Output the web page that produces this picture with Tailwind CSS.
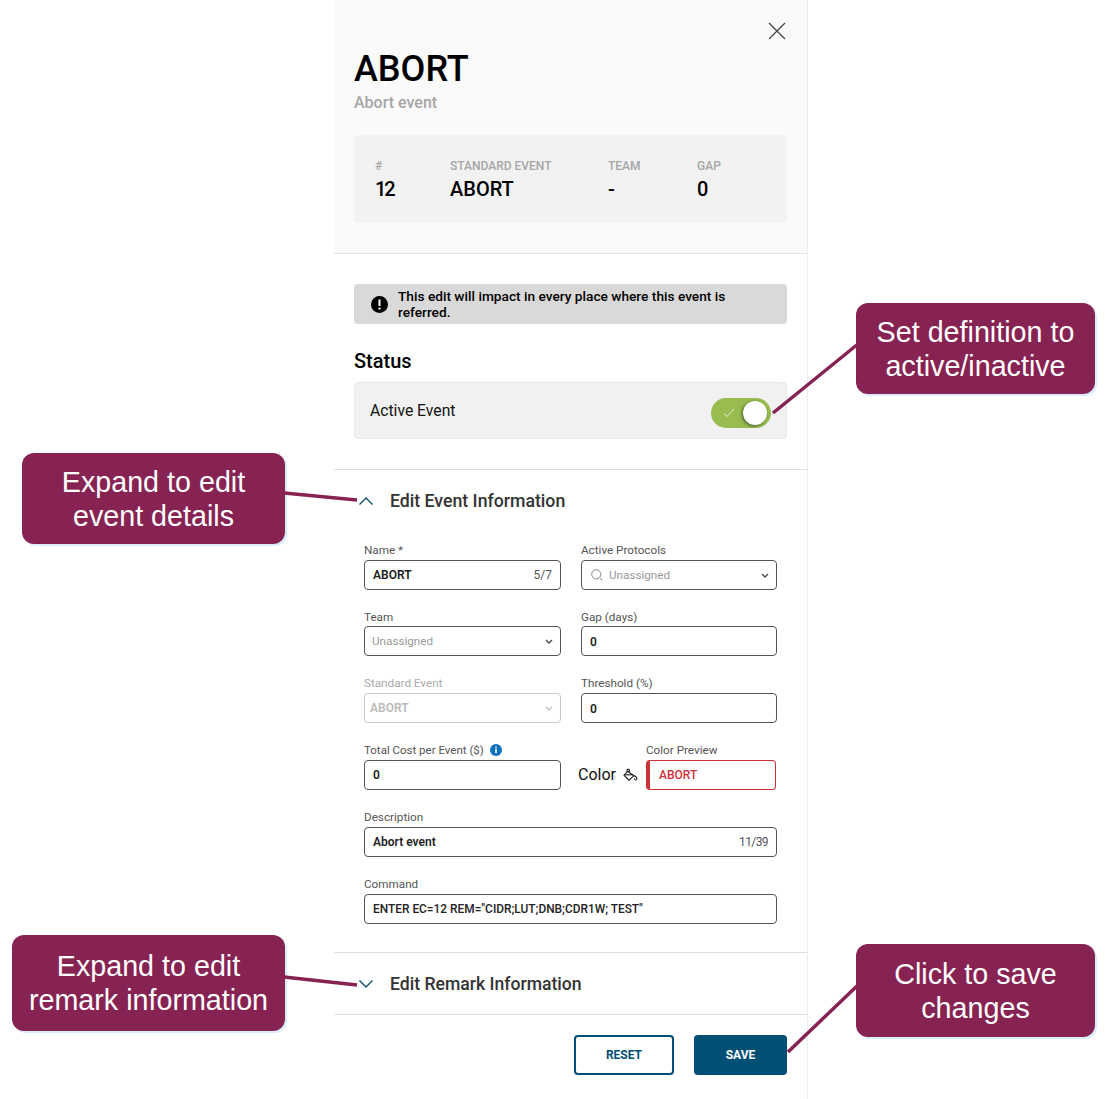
<!DOCTYPE html>
<html lang="en">
<head>
    <meta charset="UTF-8">
    <title>Edit Event</title>
    <script src="https://cdn.jsdelivr.net/npm/@tailwindcss/browser@4"></script>
</head>
<body class="bg-white font-['Roboto',sans-serif] overflow-hidden">
    <div class="relative w-[1112px] h-[1099px] overflow-hidden">
        <!-- panel -->
        <div class="ml-[334px] w-[474px] h-[1099px] border-r border-[#eeeeee] flex flex-col">
            <div class="h-[254px] shrink-0 bg-[#fafafa] border-b border-[#e3e3e3] px-5 relative">
                <svg class="absolute left-[434px] top-[22px]" width="18" height="18" viewBox="0 0 18 18" fill="none" stroke="#444" stroke-width="1.3"><path d="M1 1l16 16M17 1L1 17"/></svg>
                <h1 class="pt-[47px] text-[36px] leading-[44px] font-medium text-black">ABORT</h1>
                <p class="mt-[1px] text-[16px] leading-[22px] font-medium text-[#a6a6a6]">Abort event</p>
                <div class="mt-[21px] h-[88px] bg-[#f2f2f2] rounded flex pl-[21px] pt-6">
                    <div class="w-[75px]">
                        <div class="text-[12px] leading-[14px] font-medium text-[#a6a6a6]">#</div>
                        <div class="mt-[3px] text-[20px] leading-[26px] font-medium tracking-[-2px] text-black">12</div>
                    </div>
                    <div class="w-[158px]">
                        <div class="text-[12px] leading-[14px] font-medium text-[#a6a6a6]">STANDARD EVENT</div>
                        <div class="mt-[3px] text-[20px] leading-[26px] font-medium text-black">ABORT</div>
                    </div>
                    <div class="w-[89px]">
                        <div class="text-[12px] leading-[14px] font-medium text-[#a6a6a6]">TEAM</div>
                        <div class="mt-[3px] text-[20px] leading-[26px] font-medium text-black">-</div>
                    </div>
                    <div>
                        <div class="text-[12px] leading-[14px] font-medium text-[#a6a6a6]">GAP</div>
                        <div class="mt-[3px] text-[20px] leading-[26px] font-medium text-black">0</div>
                    </div>
                </div>
            </div>

            <div class="h-[216px] shrink-0 border-b border-[#dddddd] px-5 pt-[30px]">
                <div class="h-10 bg-[#d9d9d9] rounded flex items-center pl-[17px] pr-10 gap-[10px]">
                    <svg class="shrink-0" width="17" height="17" viewBox="0 0 17 17"><circle cx="8.5" cy="8.5" r="8.5" fill="#000"/><rect x="7.5" y="3.5" width="2" height="6.5" fill="#fff"/><rect x="7.5" y="11.5" width="2" height="2" fill="#fff"/></svg>
                    <p class="text-[13.7px] leading-4 font-medium text-black">This edit will impact in every place where this event is referred.</p>
                </div>
                <h2 class="mt-[25px] text-[20px] leading-6 font-medium text-black">Status</h2>
                <div class="mt-[9px] h-[57px] bg-[#f1f1f1] border border-[#e8e8e8] rounded flex items-center justify-between pl-[15px] pr-[15px]">
                    <span class="text-[15.7px] text-[#111]">Active Event</span>
                    <div class="mt-1 w-[60px] h-[30px] rounded-full bg-[#98bc4f] flex items-center justify-between pl-3 pr-1">
                        <svg width="12" height="10" viewBox="0 0 12 10" fill="none" stroke="#e6eecf" stroke-width="1"><path d="M1 5.5l3 3 7-7.5"/></svg>
                        <div class="w-6 h-6 rounded-full bg-white shadow-[-1px_1px_3px_rgba(0,0,0,0.55)]"></div>
                    </div>
                </div>
            </div>

            <div class="h-[483px] shrink-0 border-b border-[#dddddd]">
                <div class="h-[62px] flex items-center pl-[25px] gap-[17px]">
                    <svg width="14" height="8" viewBox="0 0 14 8" fill="none" stroke="#0e4f70" stroke-width="1.4"><path d="M0.5 7.5L7 1l6.5 6.5"/></svg>
                    <span class="text-[17.7px] font-medium text-[#333333]">Edit Event Information</span>
                </div>
                <div class="px-[30px] pt-[10px] grid grid-cols-[197px_196px] gap-x-5 gap-y-[19px] text-[11.7px]">
                    <label class="block -mb-px">
                        <span class="block leading-4 text-[#555]">Name *</span>
                        <div class="mt-[2px] h-[30px] border border-[#555] rounded flex items-center justify-between px-2">
                            <span class="text-[12px] font-semibold text-[#222]">ABORT</span>
                            <span class="text-[12px] text-[#555]">5/7</span>
                        </div>
                    </label>
                    <label class="block -mb-px">
                        <span class="block leading-4 text-[#555]">Active Protocols</span>
                        <div class="mt-[2px] h-[30px] border border-[#555] rounded flex items-center pl-[9px] pr-[7px]">
                            <svg width="12" height="12" viewBox="0 0 12 12" fill="none" stroke="#888" stroke-width="1"><circle cx="5.3" cy="5.3" r="4.6"/><path d="M8.7 8.7L11.5 11.5"/></svg>
                            <span class="ml-[6px] pt-px text-[#999]">Unassigned</span>
                            <svg class="ml-auto" width="8" height="5" viewBox="0 0 8 5" fill="none" stroke="#444" stroke-width="1.3"><path d="M1 1l3 3 3-3"/></svg>
                        </div>
                    </label>
                    <label class="block">
                        <span class="block mt-px leading-4 text-[#555]">Team</span>
                        <div class="mt-[1px] h-[30px] border border-[#555] rounded flex items-center justify-between pl-[7px] pr-[7px]">
                            <span class="pt-px text-[#999]">Unassigned</span>
                            <svg width="8" height="5" viewBox="0 0 8 5" fill="none" stroke="#444" stroke-width="1.3"><path d="M1 1l3 3 3-3"/></svg>
                        </div>
                    </label>
                    <label class="block">
                        <span class="block mt-px leading-4 text-[#555]">Gap (days)</span>
                        <div class="mt-[1px] h-[30px] border border-[#555] rounded flex items-center px-2">
                            <span class="pt-px text-[12px] font-semibold text-[#222]">0</span>
                        </div>
                    </label>
                    <label class="block">
                        <span class="block leading-4 text-[#aaa]">Standard Event</span>
                        <div class="mt-[2px] h-[30px] border border-[#c8c8c8] rounded flex items-center justify-between pl-[5px] pr-[7px]">
                            <span class="text-[12px] font-semibold text-[#bbb]">ABORT</span>
                            <svg width="8" height="5" viewBox="0 0 8 5" fill="none" stroke="#bbb" stroke-width="1.2"><path d="M1 1l3 3 3-3"/></svg>
                        </div>
                    </label>
                    <label class="block">
                        <span class="block leading-4 text-[#555]">Threshold (%)</span>
                        <div class="mt-[2px] h-[30px] border border-[#555] rounded flex items-center px-2">
                            <span class="pt-px text-[12px] font-semibold text-[#222]">0</span>
                        </div>
                    </label>
                    <label class="block">
                        <span class="flex items-center gap-[6px] text-[11.5px] leading-4 text-[#555]">Total Cost per Event ($)
                            <svg width="12" height="12" viewBox="0 0 12 12"><circle cx="6" cy="6" r="6" fill="#0b72bd"/><rect x="5.2" y="5" width="1.6" height="4.2" fill="#fff"/><rect x="5.2" y="2.7" width="1.6" height="1.5" fill="#fff"/></svg>
                        </span>
                        <div class="mt-[2px] h-[30px] border border-[#555] rounded flex items-center px-2">
                            <span class="text-[12px] font-semibold text-[#222]">0</span>
                        </div>
                    </label>
                    <div class="flex items-end">
                        <div class="h-[30px] flex items-center -ml-[3px] w-[68px]">
                            <span class="text-[16px] text-[#111]">Color</span>
                            <svg class="ml-[7px]" width="15" height="14" viewBox="0 0 15 14" fill="none" stroke="#222" stroke-width="1.1"><path d="M5 3.2L1 7.2l5 5 4.8-4.4z"/><path d="M1.6 6.8h8.8"/><path d="M4 4.5V2.2c0-1.5 2.4-1.5 2.4 0V5"/><path d="M10.8 7.8c1.6.2 2.8 1 3 2.5.1 1-.4 1.7-1.1 1.7-.8 0-1.2-.8-1-1.6"/></svg>
                        </div>
                        <div class="w-[130px]">
                            <span class="block leading-4 text-[#555]">Color Preview</span>
                            <div class="mt-[2px] h-[30px] border border-[#d03038] border-l-4 rounded flex items-center pl-[9px]">
                                <span class="text-[12px] font-medium text-[#d03038]">ABORT</span>
                            </div>
                        </div>
                    </div>
                    <label class="block col-span-2">
                        <span class="block leading-4 text-[#555]">Description</span>
                        <div class="mt-[2px] h-[30px] border border-[#555] rounded flex items-center justify-between pl-2 pr-2">
                            <span class="text-[12px] font-semibold text-[#222]">Abort event</span>
                            <span class="text-[12px] tracking-[-0.6px] text-[#555]">11/39</span>
                        </div>
                    </label>
                    <label class="block col-span-2">
                        <span class="block leading-4 text-[#555]">Command</span>
                        <div class="mt-[2px] h-[30px] border border-[#555] rounded flex items-center px-2">
                            <span class="pt-px text-[11.9px] font-medium text-[#222]">ENTER EC=12 REM="CIDR;LUT;DNB;CDR1W; TEST"</span>
                        </div>
                    </label>
                </div>
            </div>

            <div class="h-[62px] shrink-0 border-b border-[#dddddd] flex items-center pl-[25px] gap-[17px]">
                <svg width="14" height="8" viewBox="0 0 14 8" fill="none" stroke="#0e4f70" stroke-width="1.4"><path d="M0.5 0.5L7 7l6.5-6.5"/></svg>
                <span class="mt-[2px] text-[17.6px] font-medium text-[#333333]">Edit Remark Information</span>
            </div>

            <div class="flex justify-end gap-5 pr-5 pt-5">
                <button class="w-[100px] h-10 border-2 border-[#024f76] rounded text-[12px] font-bold text-[#024f76]">RESET</button>
                <button class="w-[93px] h-10 bg-[#024f76] rounded text-[12px] font-bold text-white">SAVE</button>
            </div>
        </div>

        <!-- annotations over the page -->
        <div class="absolute left-[856px] top-[303px] w-[239px] h-[91px] rounded-xl bg-[#872353] shadow-[2px_2px_0_#dcecfb] flex items-center justify-center text-center font-['Liberation_Sans',sans-serif] text-[28.7px] leading-[34px] text-white">Set definition to<br>active/inactive</div>
        <div class="absolute left-[22px] top-[453px] w-[263px] h-[91px] rounded-xl bg-[#872353] shadow-[2px_2px_0_#dcecfb] flex items-center justify-center text-center font-['Liberation_Sans',sans-serif] text-[28.7px] leading-[34px] text-white">Expand to edit<br>event details</div>
        <div class="absolute left-[12px] top-[935px] w-[273px] h-[96px] rounded-xl bg-[#872353] shadow-[2px_2px_0_#dcecfb] flex items-center justify-center text-center font-['Liberation_Sans',sans-serif] text-[28.7px] leading-[34px] text-white">Expand to edit<br>remark information</div>
        <div class="absolute left-[856px] top-[944px] w-[239px] h-[93px] rounded-xl bg-[#872353] shadow-[2px_2px_0_#dcecfb] flex items-center justify-center text-center font-['Liberation_Sans',sans-serif] text-[28.7px] leading-[34px] text-white">Click to save<br>changes</div>
        <svg class="absolute left-0 top-0 pointer-events-none" width="1112" height="1099" fill="none" stroke="#872353" stroke-width="3.5">
            <path d="M773 413L858 344"/>
            <path d="M284 493L357 500"/>
            <path d="M284 977L357 985"/>
            <path d="M788 1052L857 986"/>
        </svg>
    </div>
</body>
</html>
